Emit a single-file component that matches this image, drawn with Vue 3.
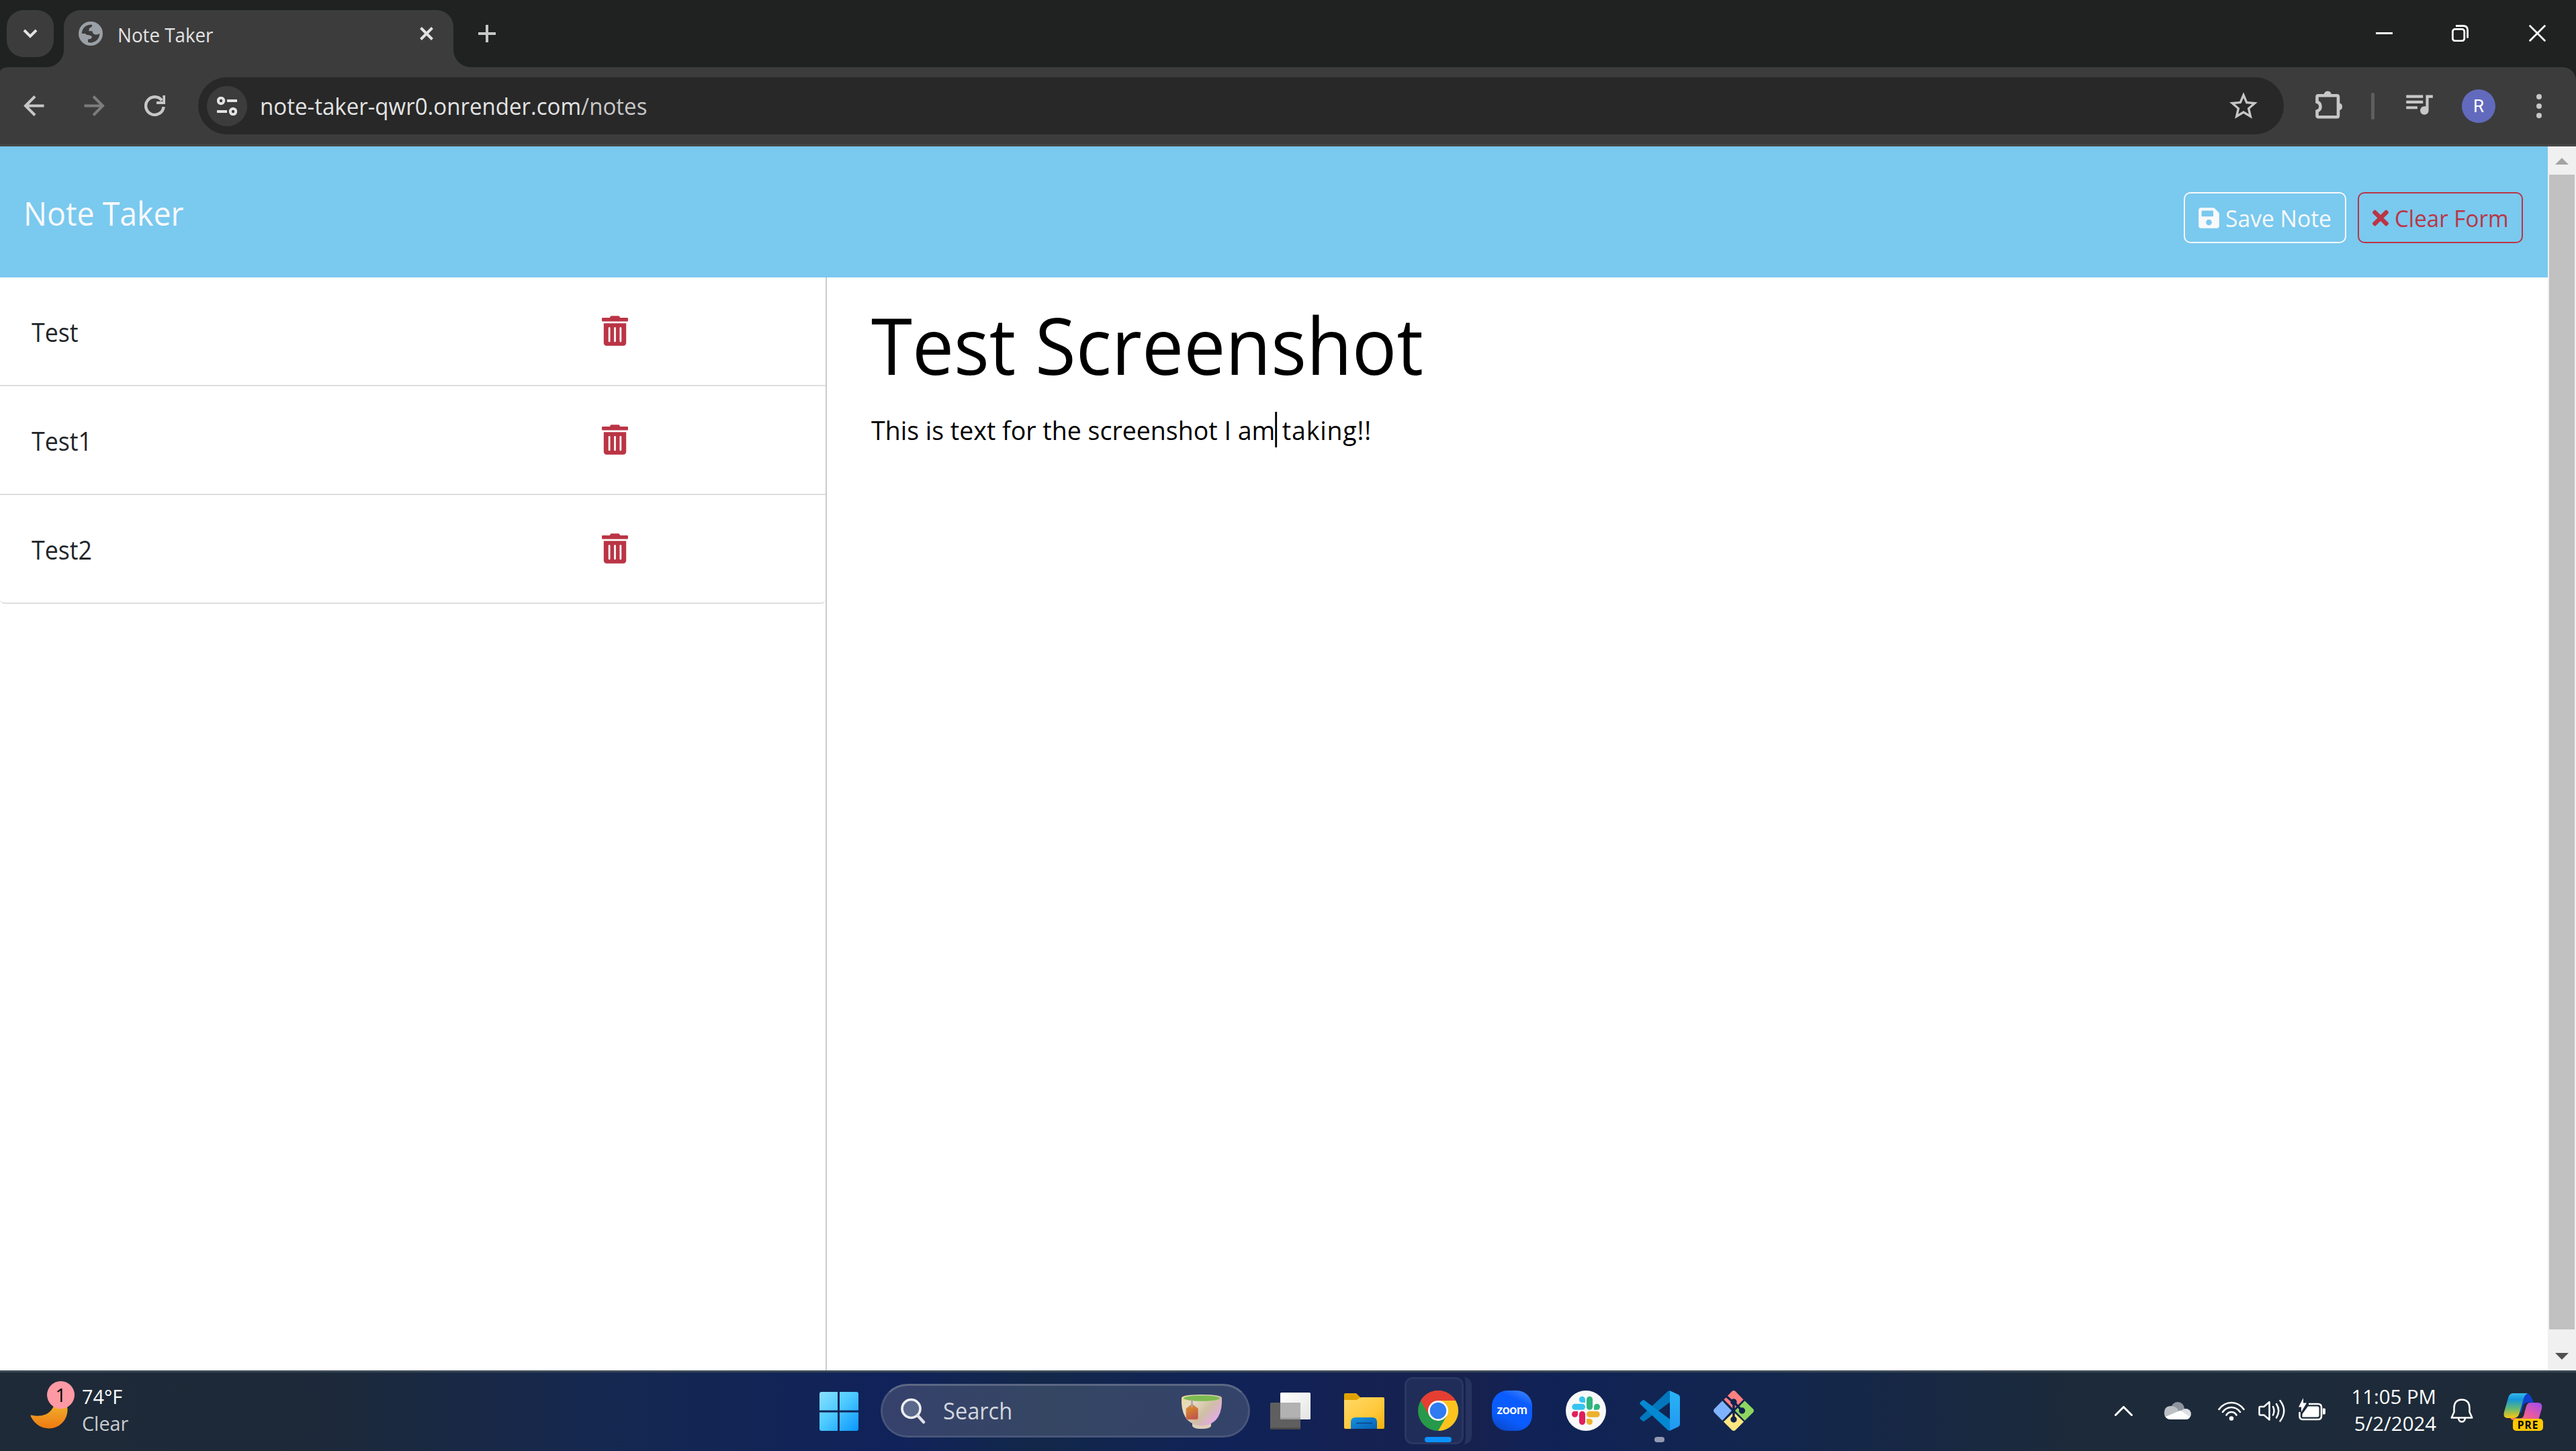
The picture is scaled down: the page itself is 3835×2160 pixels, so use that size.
<script setup>
const notes = ['Test', 'Test1', 'Test2']

const trashPath =
  'M32 464a48 48 0 0 0 48 48h288a48 48 0 0 0 48-48V128H32zm272-256a16 16 0 0 1 32 0v224a16 16 0 0 1-32 0zm-96 0a16 16 0 0 1 32 0v224a16 16 0 0 1-32 0zm-96 0a16 16 0 0 1 32 0v224a16 16 0 0 1-32 0zM432 32H312l-9.4-18.7A24 24 0 0 0 281.1 0H166.8a23.72 23.72 0 0 0-21.4 13.3L136 32H16A16 16 0 0 0 0 48v32a16 16 0 0 0 16 16h416a16 16 0 0 0 16-16V48a16 16 0 0 0-16-16z'
const savePath =
  'M433.941 129.941l-83.882-83.882A48 48 0 0 0 316.118 32H48C21.49 32 0 53.49 0 80v352c0 26.51 21.49 48 48 48h352c26.51 0 48-21.49 48-48V163.882a48 48 0 0 0-14.059-33.941zM224 416c-35.346 0-64-28.654-64-64 0-35.346 28.654-64 64-64s64 28.654 64 64c0 35.346-28.654 64-64 64zm96-304.52V212c0 6.627-5.373 12-12 12H76c-6.627 0-12-5.373-12-12V108c0-6.627 5.373-12 12-12h228.52c3.183 0 6.235 1.264 8.485 3.515l3.48 3.48A11.996 11.996 0 0 1 320 111.48z'
const timesPath =
  'M242.72 256l100.07-100.07c12.28-12.28 12.28-32.19 0-44.48l-22.24-22.24c-12.28-12.28-32.19-12.28-44.48 0L176 189.28 75.93 89.21c-12.28-12.28-32.19-12.28-44.48 0L9.21 111.45c-12.28 12.28-12.28 32.19 0 44.48L109.28 256 9.21 356.07c-12.28 12.28-12.28 32.19 0 44.48l22.24 22.24c12.28 12.28 32.2 12.28 44.48 0L176 322.72l100.07 100.07c12.28 12.28 32.2 12.28 44.48 0l22.24-22.24c12.28-12.28 12.28-32.19 0-44.48L242.72 256z'
</script>

<template>
  <div class="screen">
    <div class="tabstrip">
      <div class="tab-search">
        <svg width="24" height="16" viewBox="0 0 24 16"><path d="M3 3l9 9 9-9" fill="none" stroke="#e3e3e3" stroke-width="4" /></svg>
      </div>
      <div class="tab">
        <svg class="favicon" width="36" height="36" viewBox="0 0 36 36">
          <circle cx="18" cy="18" r="18" fill="#9aa0a6" />
          <path d="M4.7 18A13.3 13.3 0 0 1 20.3 4.9Q20 8.5 16.5 9.5Q15.3 11 15.3 14.2H20.3Q20.8 18 23 19Q27 20.5 31.3 18A13.3 13.3 0 0 1 14 30.8V26.5Q20 26.5 19.8 22.5Q18 20 13 20Q11 20 10 18Z" fill="#3c3c3c" />
        </svg>
        <span class="tab-title narrow">Note Taker</span>
        <svg class="tab-close" width="20" height="20" viewBox="0 0 20 20"><path d="M1.5 1.5l17 17M18.5 1.5l-17 17" stroke="#e3e3e3" stroke-width="4" /></svg>
      </div>
      <svg class="new-tab" width="26" height="26" viewBox="0 0 26 26"><path d="M13 0v26M0 13h26" stroke="#c7c7c7" stroke-width="4" /></svg>
      <div class="window-controls">
        <svg width="25" height="26" viewBox="0 0 25 26"><path d="M0 12.5h25" stroke="#fff" stroke-width="3" /></svg>
        <svg width="25" height="25" viewBox="0 0 25 25">
          <rect x="1.4" y="6.4" width="17.4" height="17.4" rx="3.5" fill="none" stroke="#fff" stroke-width="2.8" />
          <path d="M6 1.5H17Q23.6 1.5 23.6 8V19.5" fill="none" stroke="#fff" stroke-width="2.8" />
        </svg>
        <svg width="25" height="25" viewBox="0 0 25 25"><path d="M.8.8l23.4 23.4M24.2.8L.8 24.2" stroke="#fff" stroke-width="2.8" /></svg>
      </div>
    </div>

    <div class="toolbar">
      <div class="nav">
        <svg width="31" height="31" viewBox="0 0 31 31"><path d="M30.5 15.5H3M17 1.5L3 15.5l14 14" fill="none" stroke="#c7c7c7" stroke-width="4" /></svg>
        <svg width="31" height="31" viewBox="0 0 31 31"><path d="M.5 15.5H28M14 1.5l14 14-14 14" fill="none" stroke="#7c7c7c" stroke-width="4" /></svg>
        <svg width="31" height="31" viewBox="0 0 31 31">
          <path d="M28.6 17A13.3 13.3 0 1 1 26 7.6" fill="none" stroke="#c7c7c7" stroke-width="4.4" />
          <path d="M29.3 0V11H18" fill="none" stroke="#c7c7c7" stroke-width="4" />
        </svg>
      </div>
      <div class="omnibox">
        <span class="site-info">
          <svg width="30" height="28" viewBox="0 0 30 28" fill="none" stroke="#e3e3e3" stroke-width="4">
            <circle cx="6" cy="6" r="4.2" /><path d="M15 6h15M0 22h15" /><circle cx="24" cy="22" r="4.2" />
          </svg>
        </span>
        <span class="url narrow">note-taker-qwr0.onrender.com<span class="url-path">/notes</span></span>
        <svg class="star" width="50" height="50" viewBox="0 0 24 24"><path fill="#c7c7c7" d="M22 9.24l-7.19-.62L12 2 9.19 8.63 2 9.24l5.46 4.73L5.82 21 12 17.27 18.18 21l-1.63-7.03L22 9.24zM12 15.4l-3.76 2.27 1-4.28-3.32-2.88 4.38-.38L12 6.1l1.71 4.04 4.38.38-3.32 2.88 1 4.28L12 15.4z" /></svg>
      </div>
      <svg class="puzzle" width="42" height="42" viewBox="0 0 42 42">
        <path d="M2.5 16.7V9.2Q2.5 7.2 4.5 7.2H32Q34 7.2 34 9.2V37.2Q34 39.2 32 39.2H4.5Q2.5 39.2 2.5 37.2V30.5Q7.5 29 7.5 23.6T2.5 16.7Z" fill="none" stroke="#c7c7c7" stroke-width="4.6" />
        <path d="M12.8 6a5.4 5.4 0 0 1 11 0zM35.5 18.2a5.6 5.6 0 0 1 0 11z" fill="#c7c7c7" />
      </svg>
      <span class="divider"></span>
      <svg class="media" width="50" height="50" viewBox="0 0 24 24"><path fill="#c7c7c7" d="M15 6H3v2h12V6zm0 4H3v2h12v-2zM3 16h8v-2H3v2zM17 6v8.18c-.31-.11-.65-.18-1-.18-1.66 0-3 1.34-3 3s1.34 3 3 3 3-1.34 3-3V8h3V6h-5z" /></svg>
      <span class="avatar">R</span>
      <svg class="menu" width="8" height="36" viewBox="0 0 8 36" fill="#c7c7c7"><circle cx="4" cy="4" r="4" /><circle cx="4" cy="18" r="4" /><circle cx="4" cy="32" r="4" /></svg>
    </div>

    <div class="viewport">
      <div class="page">
        <header class="navbar">
          <a class="brand narrow">Note Taker</a>
          <div class="actions">
            <button class="btn save"><svg width="31" height="35" viewBox="0 0 448 512"><path :d="savePath" fill="currentColor" /></svg><span class="narrow">Save Note</span></button>
            <button class="btn clear"><svg width="24" height="35" viewBox="0 0 352 512"><path :d="timesPath" fill="currentColor" /></svg><span class="narrow">Clear Form</span></button>
          </div>
        </header>
        <main class="columns">
          <aside class="list-col">
            <ul class="notes">
              <li v-for="note in notes" :key="note" class="note">
                <span class="narrow">{{ note }}</span>
                <svg width="39" height="45" viewBox="0 0 448 512"><path :d="trashPath" fill="#ba3545" /></svg>
              </li>
            </ul>
          </aside>
          <section class="editor">
            <h1 class="note-title narrow">Test Screenshot</h1>
            <p class="note-text narrow">This is text for the screenshot I am<i class="caret"></i><span class="tail"> taking!!</span></p>
          </section>
        </main>
      </div>
      <div class="scrollbar">
        <span class="sb-btn"><svg width="20" height="10" viewBox="0 0 20 10"><path d="M0 10L10 0l10 10z" fill="#a3a3a3" /></svg></span>
        <span class="thumb"></span>
        <span class="sb-btn end"><svg width="20" height="10" viewBox="0 0 20 10"><path d="M0 0l10 10L20 0z" fill="#505050" /></svg></span>
      </div>
    </div>

    <footer class="taskbar">
      <div class="weather">
        <div class="moon">
          <svg width="56" height="56" viewBox="0 0 56 56">
            <defs><linearGradient id="moon" x1="0" y1="0" x2="0" y2="1"><stop offset="0" stop-color="#f2cb3c" /><stop offset="1" stop-color="#ef7911" /></linearGradient></defs>
            <path d="M1.500 35.500Q13 38.500 23 34.500Q35 29 38 12Q38 4 36 2Q55 8 55.500 27A27.500 27.500 0 0 1 28 55.500Q10 55 1 38Q0 35.500 1.500 35.500Z" fill="url(#moon)" />
          </svg>
          <span class="badge">1</span>
        </div>
        <div class="weather-text narrow"><span class="temp">74°F</span><span class="cond">Clear</span></div>
      </div>

      <svg class="start" width="58" height="58" viewBox="0 0 58 58">
        <defs><linearGradient id="win" gradientUnits="userSpaceOnUse" x1="0" y1="0" x2="58" y2="58"><stop offset="0" stop-color="#8be0ff" /><stop offset=".45" stop-color="#4ecbff" /><stop offset="1" stop-color="#0a96ff" /></linearGradient></defs>
        <path d="M3 0H27V27.500H0V3Q0 0 3 0ZM30 0H55Q58 0 58 3V27.500H30ZM0 30.500H27V58H3Q0 58 0 55ZM30 30.500H58V55Q58 58 55 58H30Z" fill="url(#win)" />
      </svg>

      <div class="search">
        <svg width="37" height="39" viewBox="0 0 37 39">
          <circle cx="15.500" cy="16" r="13.500" fill="#5a688c" stroke="#eef0f3" stroke-width="3.600" />
          <path d="M25 26l9 10" stroke="#dfe2e8" stroke-width="4.400" stroke-linecap="round" />
        </svg>
        <span class="search-label narrow">Search</span>
        <svg class="cup" width="60" height="51" viewBox="0 0 60 51">
          <defs>
            <linearGradient id="cup" x1="0" y1="0" x2="1" y2=".7"><stop offset="0" stop-color="#ead894" /><stop offset=".3" stop-color="#e6dcc4" /><stop offset=".65" stop-color="#cfbfa4" /><stop offset="1" stop-color="#e6a8ee" /></linearGradient>
            <linearGradient id="bag" x1="0" y1="0" x2=".4" y2="1"><stop offset="0" stop-color="#e09a1c" /><stop offset="1" stop-color="#c05a48" /></linearGradient>
          </defs>
          <path d="M16 42H44V47Q42 51 30 51T16 47Z" fill="#e0cdb8" />
          <path d="M0 5Q0 0 30 0T60 5Q61 27 51 38Q42 46.500 30 46.500T9 38Q-1 27 0 5Z" fill="url(#cup)" />
          <ellipse cx="30" cy="5.500" rx="27" ry="4.200" fill="#7dbb50" />
          <path d="M15.500 14L24.500 21V35Q24.500 37 22.500 37H9Q7 37 7 35V21Z" fill="url(#bag)" stroke="#e07a6a" stroke-width=".8" />
          <path d="M15.500 7.500V19" stroke="#b0a4ae" stroke-width="2.600" />
        </svg>
      </div>

      <div class="apps">
        <div class="app">
          <svg width="60" height="56" viewBox="0 0 60 56">
            <defs><linearGradient id="tv" x1="0" y1="0" x2="1" y2="1"><stop offset="0" stop-color="#fff" /><stop offset="1" stop-color="#e4e4e4" /></linearGradient></defs>
            <rect y="16" width="45" height="40" rx="1.500" fill="#5f5f5f" /><rect y="53.500" width="45" height="2.500" rx="1" fill="#474747" />
            <rect x="15" y="1" width="45" height="40" rx="1.500" fill="url(#tv)" />
            <path d="M15 16H45V41H15Z" fill="#b2b2b2" /><path d="M15 38.500H45V41H15Z" fill="#9c9c9c" />
          </svg>
        </div>
        <div class="app">
          <svg class="folder" width="60" height="53" viewBox="0 0 60 53">
            <defs>
              <linearGradient id="fold" x1="0" y1="0" x2="1" y2="1"><stop offset="0" stop-color="#ffd968" /><stop offset=".6" stop-color="#ffc83a" /><stop offset="1" stop-color="#f5af0a" /></linearGradient>
              <linearGradient id="fblue" x1="0" y1="0" x2="1" y2="1"><stop offset="0" stop-color="#1793e0" /><stop offset="1" stop-color="#0560b4" /></linearGradient>
            </defs>
            <path d="M0 2Q0 0 2 0H18L24 6V12H0Z" fill="#e0a100" />
            <path d="M0 10H17Q19 10 21 8.500L23 7Q24 6 26 6H58Q60 6 60 8V51Q60 53 58 53H2Q0 53 0 51Z" fill="url(#fold)" />
            <path d="M10 53V43Q10 36 17 36H42Q49 36 49 43V53Z" fill="url(#fblue)" /><path d="M18 44.500H42" stroke="#0a4b8c" stroke-width="1.800" />
          </svg>
        </div>
        <div class="app active">
          <svg width="60" height="60" viewBox="0 0 60 60">
            <circle cx="30" cy="30" r="30" fill="#27994a" />
            <path d="M4 15A30 30 0 0 1 56 15H30L17 37.500Z" fill="#e63e32" />
            <path d="M56 15A30 30 0 0 1 30 60L43 37.500L30 15Z" fill="#fcc31e" />
            <circle cx="30" cy="30" r="15" fill="#fff" /><circle cx="30" cy="30" r="12.300" fill="#2f7bf0" />
          </svg>
          <i class="run on"></i>
        </div>
        <div class="app"><span class="zoom">zoom</span></div>
        <div class="app">
          <svg width="60" height="60" viewBox="0 0 60 60">
            <circle cx="30" cy="30" r="30" fill="#f8f8f8" />
            <rect x="9.300" y="19.700" width="19.700" height="9" rx="4.500" fill="#36c5f0" /><path d="M29 18H24.500A4.600 4.600 0 1 1 29 13.400Z" fill="#36c5f0" />
            <rect x="31" y="8.700" width="9" height="20" rx="4.500" fill="#2eb67d" /><path d="M42 28.700V24.200A4.500 4.500 0 1 1 46.500 28.700Z" fill="#2eb67d" />
            <rect x="31" y="30.700" width="19.700" height="9" rx="4.500" fill="#ecb22e" /><path d="M31 42H35.500A4.500 4.500 0 1 1 31 46.500Z" fill="#ecb22e" />
            <rect x="20" y="30.700" width="9" height="20.300" rx="4.500" fill="#e01e5a" /><path d="M18 30.700V35.200A4.500 4.500 0 1 1 13.500 30.700Z" fill="#e01e5a" />
          </svg>
        </div>
        <div class="app">
          <svg width="60" height="60" viewBox="0 0 60 60">
            <defs><linearGradient id="vs" x1="0" y1="0" x2="0" y2="1"><stop offset="0" stop-color="#29b5f6" /><stop offset="1" stop-color="#2196f0" /></linearGradient></defs>
            <path d="M1 39.500L42 1Q43.500 0 45.500 .5V17L7.500 45.300Q5.500 46.500 4 45.200L.9 42.500Q-.4 41 1 39.500Z" fill="#0277bd" />
            <path d="M1 20.500L42 59Q43.500 60 45.500 59.500V43L7.500 14.700Q5.500 13.500 4 14.800L.9 17.500Q-.4 19 1 20.500Z" fill="#0488d2" />
            <path d="M45 .3L57.500 6Q60 7.300 60 10V50Q60 52.700 57.500 54L45 59.700Z" fill="url(#vs)" />
          </svg>
          <i class="run"></i>
        </div>
        <div class="app">
          <svg width="60" height="60" viewBox="0 0 60 60">
            <path d="M27.500 1Q30 -1 32.500 1L44.500 13.500L30 28L15.500 13.500Z" fill="#ff8080" />
            <path d="M1 27.500L13 15.200L27 30L13 44.800L1 32.500Q-1 30 1 27.500Z" fill="#80b3ff" />
            <path d="M59 27.500L46.500 15.200L32 30L46.500 44.800L59 32.500Q61 30 59 27.500Z" fill="#8dd65f" />
            <path d="M27.500 59Q30 61 32.500 59L45 46.500L30 32L15 46.500Z" fill="#ffe680" />
            <g stroke="#11234f" stroke-width="3.400" fill="#11234f"><path d="M18.500 8L30 18V43M30 17L42.500 30" fill="none" /><circle cx="30" cy="17" r="3" /><circle cx="30" cy="43" r="3" /><circle cx="42.500" cy="30" r="3" /></g>
          </svg>
        </div>
      </div>

      <div class="tray">
        <svg class="t-chev" width="27" height="15" viewBox="0 0 27 15"><path d="M1.500 13.500l12-12 12 12" fill="none" stroke="#fff" stroke-width="3" stroke-linecap="round" /></svg>
        <svg class="t-cloud" width="40" height="26" viewBox="0 0 40 26">
          <circle cx="20" cy="10" r="10" fill="#8e949d" /><path d="M0 17Q0 6 10 6Q17 6 21 12L16 22L3 24Q0 21 0 17Z" fill="#bcc0c5" />
          <circle cx="32" cy="18" r="8" fill="#dedfe2" /><path d="M2 22L24 12.500L38 22Q37 26 32 26H9Q4 26 2 22Z" fill="#fff" />
        </svg>
        <svg class="t-wifi" width="40" height="29" viewBox="0 0 40 29" fill="none" stroke="#fff" stroke-width="2.600" stroke-linecap="round">
          <path d="M1.500 12Q9 2 20 2T38.500 12M7 16Q12 9 20 9T33 16M12.500 20.500Q15 16 20 16T27.500 20.500" /><circle cx="20" cy="25.500" r="2" fill="#fff" />
        </svg>
        <svg class="t-sound" width="40" height="34" viewBox="0 0 40 34" fill="none" stroke="#fff" stroke-width="2.500" stroke-linecap="round" stroke-linejoin="round">
          <path d="M1.500 12.500Q1.500 11 3 11H8.500L16.500 4V30.500L8.500 23.500H3Q1.500 23.500 1.500 22ZM22 11Q25 17 22 23.500M27 7Q33.500 17 27 27.500M32.500 2Q44 17 32.500 32.500" />
        </svg>
        <svg class="t-batt" width="40" height="34" viewBox="0 0 40 34">
          <path d="M15 9H29Q34 9 34 14V27Q34 32 29 32H6Q1.500 32 1.500 27V21" fill="none" stroke="#fff" stroke-width="2.600" />
          <path d="M36 15.500H38.500Q40 15.500 40 17V22.500Q40 24.500 38.500 24.500H36ZM14 12.500H28Q30.500 12.500 30.500 15V26Q30.500 28.500 28 28.500H5.500V24Z" fill="#fff" /><path d="M7 0V7.500H12L4 21V13.500H0Z" fill="#fff" />
        </svg>
        <div class="clock narrow"><span>11:05 PM</span><span>5/2/2024</span></div>
        <svg class="t-bell" width="34" height="36" viewBox="0 0 34 36" fill="none" stroke="#fff" stroke-width="2.500" stroke-linejoin="round">
          <path d="M17 1.500Q28.500 2 28.500 14V20L32.300 28.500H1.700L5.500 20V14Q5.500 2 17 1.500ZM12 29.500Q13 34.500 17 34.500T22 29.500" />
        </svg>
        <div class="copilot">
          <svg width="59" height="56" viewBox="0 0 59 56">
            <defs>
              <linearGradient id="c1" x1="0" y1="0" x2="0" y2="1"><stop offset="0" stop-color="#35b8e8" /><stop offset=".25" stop-color="#1496dc" /><stop offset=".6" stop-color="#5fb878" /><stop offset="1" stop-color="#fcc80e" /></linearGradient>
              <linearGradient id="c2" x1="1" y1="0" x2="0" y2="1"><stop offset="0" stop-color="#a04cf0" /><stop offset=".5" stop-color="#e458a8" /><stop offset="1" stop-color="#ff7a50" /></linearGradient>
            </defs>
            <path d="M32 0Q39 0 41 5L45 14Q32 12 30 18L26 30L22 20Z" fill="#1040cc" />
            <path d="M14 0H36Q32 2 30 8L24 29Q22 37 15 37H6Q-1 37 1 28L7 7Q9 0 14 0Z" fill="url(#c1)" />
            <path d="M40 14H51Q59 14 57 23L52 40H13L10 37H20Q28 38 30 34L34 19Q36 14 40 14Z" fill="url(#c2)" />
            <path d="M34 17L29 34Q28 38 23 37Q26 34 27 29L29 20Q30 15 34 14.500Z" fill="#1e2a38" />
          </svg>
          <span class="pre">PRE</span>
        </div>
      </div>
    </footer>
  </div>
</template>

<style>
body { margin: 0; background: #202221; }
</style>

<style scoped>
.screen { width: 3835px; height: 2160px; display: flex; flex-direction: column; overflow: hidden; background: #202221; font-family: "Open Sans", "Noto Sans", sans-serif; }
svg { display: block; flex: none; }
span, a { white-space: nowrap; }
/* Slightly condensed UI lettering */
.narrow { transform: scaleX(var(--sx, 0.93)); transform-origin: 0 50%; }

.tabstrip { height: 100px; flex: none; display: flex; align-items: flex-start; }
.tab-search { width: 70px; height: 70px; margin: 15px 0 0 10px; border-radius: 25px; background: #3c3c3c; display: flex; align-items: center; justify-content: center; }
.tab { position: relative; box-sizing: border-box; width: 580px; height: 85px; margin: 15px 0 0 15px; padding: 0 30px 15px 22px; border-radius: 25px 25px 0 0; background: #3c3c3c; display: flex; align-items: center; }
.tab::before, .tab::after { content: ""; position: absolute; bottom: 0; width: 26px; height: 26px; }
.tab::before { left: -26px; background: radial-gradient(circle at 0 0, transparent 25.500px, #3c3c3c 26.500px); }
.tab::after { right: -26px; background: radial-gradient(circle at 100% 0, transparent 25.500px, #3c3c3c 26.500px); }
.tab-title { margin-left: 22px; margin-top: 4px; font-size: 29.500px; line-height: 40px; color: #e3e3e3; --sx: 0.94; }
.tab-close { margin-left: auto; }
.new-tab { margin: 37px 0 0 37px; }
.window-controls { display: flex; gap: 90px; margin: 37px 45px 0 auto; align-items: flex-start; }
.window-controls svg:first-child { margin-right: -2px; }

.toolbar { height: 118px; box-sizing: border-box; flex: none; display: flex; align-items: center; padding-left: 35px; border-bottom: 3px solid #474747; border-radius: 14px 20px 0 0 / 7px 20px 0 0; background: #3c3c3c; }
.nav { display: flex; gap: 59px; }
.omnibox { width: 3105px; height: 85px; box-sizing: border-box; margin-left: 49px; padding: 0 35px 0 13px; border-radius: 43px; background: #282828; display: flex; align-items: center; }
.site-info { width: 60px; height: 60px; border-radius: 50%; background: #3c3c3c; display: flex; align-items: center; justify-content: center; }
.url { margin-left: 19px; font-size: 34.500px; line-height: 50px; color: #e3e3e3; --sx: 0.958; }
.url-path { color: #c7c7c7; }
.star { margin-left: auto; }
.puzzle { margin: -4px 0 0 47px; }
.divider { width: 5px; height: 40px; margin-left: 41px; border-radius: 3px; background: #5f5f5f; }
.media { margin: -7px 0 0 41px; }
.avatar { width: 50px; height: 50px; margin-left: 39px; border-radius: 50%; background: #626abd; color: #fff; font: 26px/51px Roboto, sans-serif; text-align: center; }
.menu { margin-left: 61px; }

.viewport { height: 1822px; flex: none; display: flex; background: #fff; }
.page { width: 3793px; display: flex; flex-direction: column; }
.navbar { height: 195px; box-sizing: border-box; flex: none; display: flex; justify-content: space-between; align-items: center; padding: 0 37px 0 35px; background: #7ac9ef; }
.brand { margin-top: 4px; font-size: 49px; line-height: 75px; color: #f8f9fa; --sx: 0.948; }
.actions { display: flex; gap: 17px; margin-top: 17px; }
.btn { height: 76px; box-sizing: border-box; display: flex; align-items: center; padding: 0 20px; border: 2.500px solid; border-radius: 10px; background: none; font: 34.500px/52px "Open Sans", "Noto Sans", sans-serif; }
.save { width: 242px; color: #f8f9fa; }
.clear { width: 246px; color: #ba3545; }
.btn span { margin-left: 9px; margin-top: 2px; }
.save span { --sx: 0.975; }
.clear span { --sx: 0.96; }
.columns { flex: 1; display: flex; }
.list-col { width: 1229px; border-right: 2px solid #ccc; }
.notes { list-style: none; margin: 0; padding: 0; }
.note { height: 162px; box-sizing: border-box; display: flex; align-items: center; border-bottom: 2px solid #dedede; padding-left: 47px; font-size: 39px; color: #212529; }
.note:last-child { border-radius: 0 0 7px 7px; }
.note span { width: 849px; margin-top: 1px; --sx: 0.915; }
.note svg { margin-top: -1px; }
.editor { display: flex; flex-direction: column; align-items: flex-start; padding: 10px 0 0 66px; }
.note-title { margin: 0; font-weight: 400; font-size: 118px; line-height: 180px; color: #000; white-space: nowrap; --sx: 0.938; }
.note-text { margin: 7px 0 0; font-size: 39px; line-height: 60px; color: #000; white-space: nowrap; --sx: 0.962; }
.tail { letter-spacing: 0.850px; white-space: pre; }
.caret { display: inline-block; width: 2.600px; height: 53px; margin: 0 -2.600px 0 0; vertical-align: -11px; background: #000; }

.scrollbar { width: 42px; background: #f0f0f0; display: flex; flex-direction: column; }
.sb-btn { height: 42px; display: flex; align-items: center; justify-content: center; padding-top: 1px; box-sizing: border-box; }
.sb-btn.end { margin-top: auto; padding-top: 0; }
.thumb { height: 1719px; margin: 0 2px; background: #c1c1c1; }

.taskbar { height: 120px; box-sizing: border-box; flex: none; display: flex; align-items: center; border-top: 3px solid #3b4955; padding-bottom: 3px; background: linear-gradient(90deg, #1e2a38 0, #1d2938 450px, #152850 900px, #10225a 1330px, #122849 1540px, #102257 1820px, #17214e 2190px, #102256 2290px, #12264e 2620px, #1c2a3a 3080px, #1e2a38 100%); }
.weather { width: 1220px; box-sizing: border-box; padding-left: 45px; display: flex; align-items: center; }
.moon { position: relative; width: 77px; height: 71px; display: flex; align-items: flex-end; margin-top: -17px; }
.badge { position: absolute; left: 25px; top: 0; width: 41px; height: 41px; border-radius: 50%; background: #ff99a4; color: #000; font-size: 28px; line-height: 41px; text-align: center; }
.weather-text { display: flex; flex-direction: column; font-size: 29.500px; line-height: 40px; color: #fff; margin-top: -3px; --sx: 0.975; }
.cond { color: #c8ccd0; }
.start { margin-top: 2px; }
.search { width: 550px; height: 80px; box-sizing: border-box; margin: 0 5px 0 33px; padding: 0 39px 0 27px; border: 3px solid #48557a; border-top-color: #5c6884; border-radius: 40px; background: linear-gradient(90deg, #36416c, #354663 45%, #34436a); display: flex; align-items: center; }
.search-label { margin-left: 26px; font-size: 34.500px; line-height: 50px; color: #d3d7de; --sx: 0.945; }
.cup { margin-left: auto; margin-top: 3px; }
.apps { display: flex; }
.app { position: relative; width: 110px; height: 100px; display: flex; align-items: center; justify-content: center; }
.folder { margin-top: 1px; }
.active svg { z-index: 1; }
.active::before { content: ""; position: absolute; left: 5px; top: 0; width: 88px; height: 100px; box-sizing: border-box; border: 3px solid #2a3762; border-radius: 12px; background: #202d59; }
.active::after { content: ""; position: absolute; left: 80px; top: 0; width: 25px; height: 100px; box-sizing: border-box; border-right: 9px solid #27335f; border-radius: 12px; }
.run { position: absolute; left: 47px; bottom: 3px; width: 15px; height: 8px; border-radius: 4px; background: #9299b0; }
.run.on { left: 35px; width: 40px; background: #0a91ff; z-index: 1; }
.zoom { width: 60px; height: 60px; border-radius: 23px; background: linear-gradient(205deg, #4a8cf8 0, #0b5cff 28%, #0b5cff 65%, #0845bd 100%); color: #fff; font: 700 19px/56px Lato, sans-serif; letter-spacing: -0.300px; text-align: center; }

.tray { margin-left: auto; display: flex; align-items: center; padding-right: 49px; }
.t-cloud { margin-left: 47px; }
.t-wifi { margin-left: 40px; }
.t-sound { margin-left: 20px; }
.t-batt { margin-left: 20px; margin-top: -5px; }
.clock { width: 165px; display: flex; flex-direction: column; align-items: flex-end; font-size: 29.500px; line-height: 40px; color: #fff; margin-top: -3px; transform-origin: 100% 50%; --sx: 0.995; }
.t-bell { margin-left: 21px; }
.copilot { position: relative; margin-left: 45px; margin-top: 4px; }
.pre { position: absolute; left: 14px; top: 38px; width: 45px; height: 18px; border-radius: 5px; background: #ffc800; color: #000; font-size: 15.500px; font-weight: 700; line-height: 18px; letter-spacing: 1px; text-align: center; }
</style>
